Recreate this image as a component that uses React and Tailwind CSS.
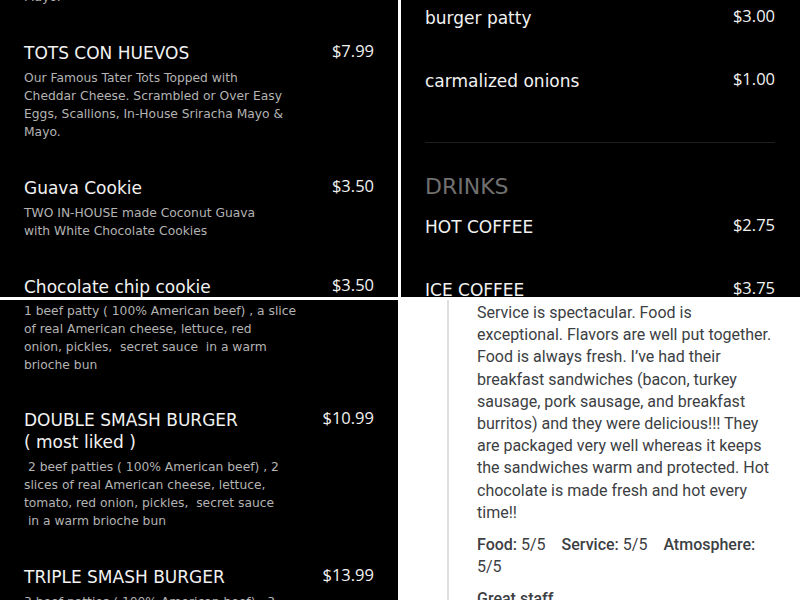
import React from "react";

const menuFont = { fontFamily: '"DejaVu Sans", sans-serif' };

function Title({ children }) {
  return (
    <div className="text-[17px] leading-[22px] text-[#f2f2f2]" style={menuFont}>
      {children}
    </div>
  );
}

function Price({ children }) {
  return (
    <div className="shrink-0 text-[16.5px] leading-[22px] text-[#f2f2f2] font-['Open_Sans',sans-serif] -mt-[2px]">
      {children}
    </div>
  );
}

function Desc({ lines, className = "mt-[5px]" }) {
  return (
    <div className={`${className} text-[12.3px] leading-[18px] text-[#b3b3b3] whitespace-pre`} style={menuFont}>
      {lines.map((l, i) => (
        <div key={i}>{l}</div>
      ))}
    </div>
  );
}

function Item({ title, price, lines, className = "" }) {
  return (
    <div className={className}>
      <div className="flex justify-between items-start">
        <Title>{title}</Title>
        <Price>{price}</Price>
      </div>
      {lines && <Desc lines={lines} />}
    </div>
  );
}

const review = [
  "Service is spectacular. Food is",
  "exceptional. Flavors are well put together.",
  "Food is always fresh. I\u2019ve had their",
  "breakfast sandwiches (bacon, turkey",
  "sausage, pork sausage, and breakfast",
  "burritos) and they were delicious!!! They",
  "are packaged very well whereas it keeps",
  "the sandwiches warm and protected. Hot",
  "chocolate is made fresh and hot every",
  "time!!",
];

export default function App() {
  return (
    <div className="w-[800px] h-[600px] bg-white overflow-hidden flex flex-col">
      {/* top row */}
      <div className="flex gap-[3px] h-[297px] shrink-0">
        {/* top-left */}
        <div className="w-[398px] bg-black overflow-hidden px-6">
          <div className="-mt-[12px]">
            <div className="text-[12.3px] leading-[18px] text-[#b3b3b3]" style={menuFont}>Mayo.</div>
            <Item
              className="mt-[36px]"
              title="TOTS CON HUEVOS"
              price="$7.99"
              lines={[
                "Our Famous Tater Tots Topped with",
                "Cheddar Cheese. Scrambled or Over Easy",
                "Eggs, Scallions, In-House Sriracha Mayo &",
                "Mayo.",
              ]}
            />
            <Item
              className="mt-[36px]"
              title="Guava Cookie"
              price="$3.50"
              lines={["TWO IN-HOUSE made Coconut Guava", "with White Chocolate Cookies"]}
            />
            <Item className="mt-[36px]" title="Chocolate chip cookie" price="$3.50" />
          </div>
        </div>
        {/* top-right */}
        <div className="flex-1 bg-black overflow-hidden pl-6 pr-[25px]">
          <Item className="mt-[7px]" title="burger patty" price="$3.00" />
          <Item className="mt-[41px]" title="carmalized onions" price="$1.00" />
          <div className="mt-[50px] h-px bg-[#1e1e1e]" />
          <div className="mt-[30px] text-[22px] leading-[28px] text-[#707070]" style={menuFont}>
            DRINKS
          </div>
          <Item className="mt-[15px]" title="HOT COFFEE" price="$2.75" />
          <Item className="mt-[41px]" title="ICE COFFEE" price="$3.75" />
        </div>
      </div>
      {/* bottom row */}
      <div className="mt-[3px] flex flex-1 min-h-0">
        <div className="w-[398px] bg-black overflow-hidden px-6 pt-[2px]">
          <Desc
            className="mt-0"
            lines={[
              "1 beef patty ( 100% American beef) , a slice",
              "of real American cheese, lettuce, red",
              "onion, pickles,  secret sauce  in a warm",
              "brioche bun",
            ]}
          />
          <Item
            className="mt-[35px]"
            title={
              <>
                DOUBLE SMASH BURGER
                <br />( most liked )
              </>
            }
            price="$10.99"
            lines={[
              " 2 beef patties ( 100% American beef) , 2",
              "slices of real American cheese, lettuce,",
              "tomato, red onion, pickles,  secret sauce",
              " in a warm brioche bun",
            ]}
          />
          <Item
            className="mt-[36px]"
            title="TRIPLE SMASH BURGER"
            price="$13.99"
            lines={["3 beef patties ( 100% American beef) , 3"]}
          />
        </div>
        <div className="flex-1 bg-white overflow-hidden flex pl-[49px]">
          <div className="w-[2px] bg-[#dedede] shrink-0" />
          <div className="pl-[28px] pt-[2px] font-['Roboto',sans-serif] text-[16px] text-[#3c4043] whitespace-nowrap">
            <div className="leading-[22.2px]">
              {review.map((l, i) => (
                <div key={i}>{l}</div>
              ))}
            </div>
            <div className="mt-[10px] leading-[22px] flex flex-wrap w-[300px]">
              <span className="mr-[16px]">
                <span className="font-medium">Food:</span> 5/5
              </span>
              <span className="mr-[16px]">
                <span className="font-medium">Service:</span> 5/5
              </span>
              <span className="font-medium">Atmosphere:</span>
              <span className="w-full">5/5</span>
            </div>
            <div className="mt-[10px] leading-[22px] font-medium">Great staff</div>
          </div>
        </div>
      </div>
    </div>
  );
}
